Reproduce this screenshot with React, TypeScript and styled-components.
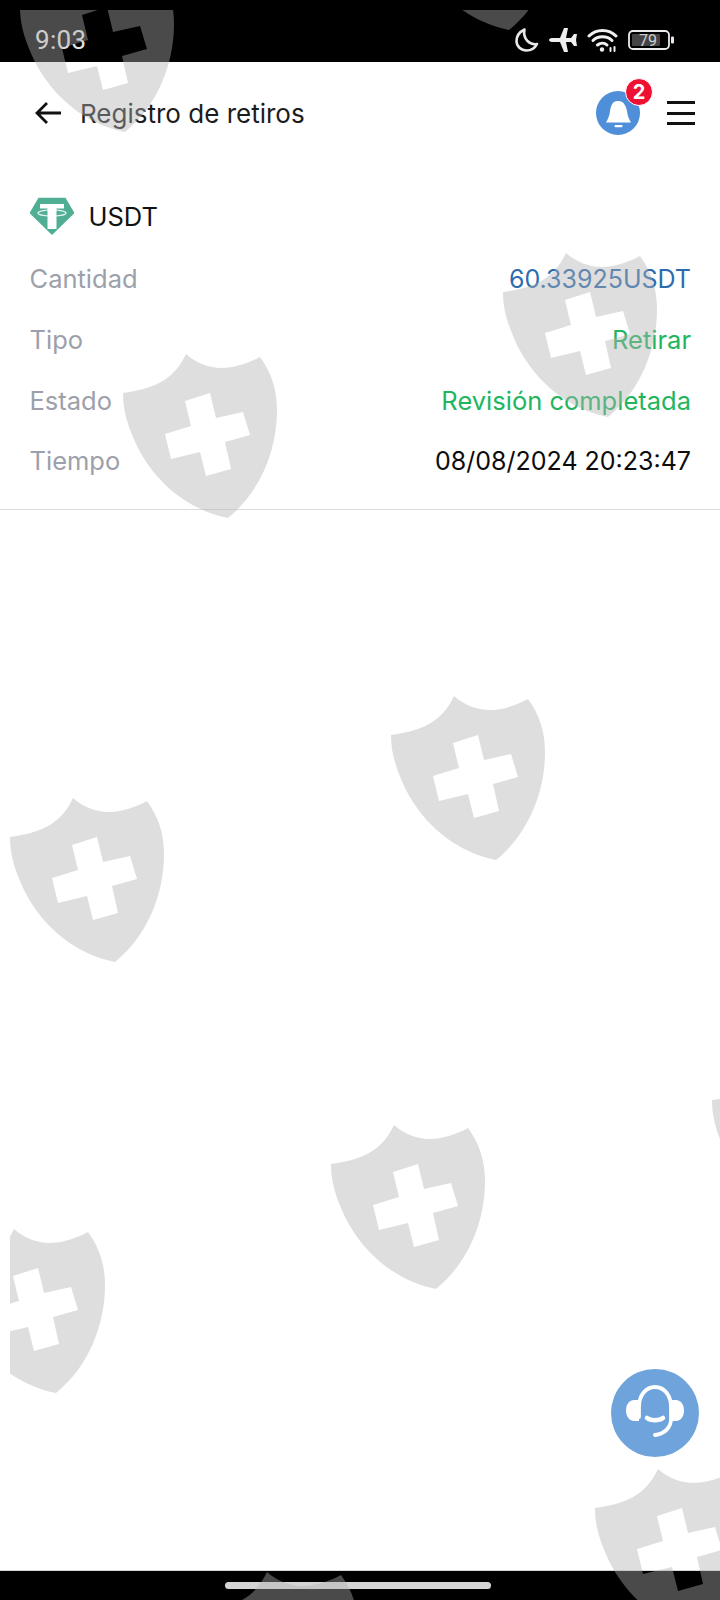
import React from "react";
import styled, { createGlobalStyle } from "styled-components";

const Global = createGlobalStyle`
  html, body { margin: 0; padding: 0; background: #fff; }
  * { box-sizing: border-box; }
`;

const Page = styled.div`
  position: relative;
  width: 720px;
  height: 1600px;
  display: flex;
  flex-direction: column;
  overflow: hidden;
  background: #fff;
  font-family: "Inter", "Liberation Sans", sans-serif;
`;

const StatusBar = styled.div`
  height: 62px;
  flex: none;
  background: #000;
  display: flex;
  align-items: center;
  justify-content: space-between;
  padding: 17px 46px 0 35px;
  color: #e2e2e2;
`;

const Clock = styled.span`
  font-family: "Roboto", sans-serif;
  font-size: 26px;
  letter-spacing: 0.3px;
`;

const StatusIcons = styled.div`
  display: flex;
  align-items: center;
  gap: 10px;
`;

const Header = styled.header`
  height: 102px;
  flex: none;
  display: flex;
  align-items: center;
  padding: 0 25px 0 34px;
`;

const Back = styled.span`
  display: flex;
  margin-right: 18px;
`;

const Title = styled.h1`
  margin: 0;
  flex: 1;
  font-size: 26px;
  font-weight: 400;
  color: #1c1c1c;
`;

const BellWrap = styled.div`
  position: relative;
  width: 44px;
  height: 44px;
  margin-right: 27px;
  border-radius: 50%;
  background: #4f8ed9;
`;

const Badge = styled.span`
  position: absolute;
  top: -13px;
  right: -13px;
  width: 28px;
  height: 28px;
  border: 1px solid #fff;
  border-radius: 50%;
  background: #ee1133;
  color: #fff;
  font-size: 20px;
  font-weight: 700;
  display: flex;
  align-items: center;
  justify-content: center;
`;

const Burger = styled.div`
  width: 28px;
  display: flex;
  flex-direction: column;
  gap: 7.5px;
`;

const BurgerLine = styled.span`
  height: 3px;
  background: #111;
`;

const Card = styled.section`
  padding: 32px 29px 18px 29.5px;
  border-bottom: 1px solid #dcdcdc;
`;

const Coin = styled.div`
  display: flex;
  align-items: center;
  gap: 15px;
  height: 40px;
  margin-bottom: 12.5px;
  font-size: 25.500px;
  color: #111;
`;

const Row = styled.div`
  display: flex;
  align-items: center;
  justify-content: space-between;
  height: 60.700px;
`;

const Label = styled.span`
  font-size: 25.500px;
  color: #9ca0aa;
`;

const Value = styled.span<{ $tone: "blue" | "green" | "dark" }>`
  font-size: ${(p) => (p.$tone === "green" ? "25.500px" : "25px")};
  color: ${(p) => (p.$tone === "blue" ? "#2b6cb0" : p.$tone === "green" ? "#22b55f" : "#0c0c0c")};
`;

const Body = styled.main`
  flex: 1;
`;

const NavBar = styled.footer`
  height: 30px;
  flex: none;
  background: #000;
  border-top: 1px solid #d8d8d8;
  display: flex;
  justify-content: center;
  padding: 11px 5px 0 0;
`;

const Pill = styled.span`
  width: 266px;
  height: 7px;
  border-radius: 4px;
  background: #d4d4d4;
`;

const Support = styled.div`
  position: absolute;
  left: 611px;
  top: 1369px;
  width: 88px;
  height: 88px;
  border-radius: 50%;
  background: #6fa3dc;
`;

const Watermarks = styled.div`
  position: absolute;
  inset: 10px 0 0 10px;
  overflow: hidden;
  pointer-events: none;
`;

const Shield = styled.svg<{ $x: number; $y: number }>`
  position: absolute;
  left: ${(p) => p.$x - 10}px;
  top: ${(p) => p.$y - 10}px;
  width: 156px;
  height: 165px;
`;

const spots: [number, number][] = [
  [20, -32],
  [404, -134],
  [503, 253],
  [123, 354],
  [391, 696],
  [10, 798],
  [712, 1061],
  [331, 1125],
  [-49, 1229],
  [595, 1469],
  [204, 1572],
];

const shieldPath =
  "M63 0C73 9 87 14 98 14C112 14 126 9 137 3C148 18 154 35 154 56C154 97 137 138 105 164C66 156 33 130 14 92C5 72 0 58 0 39C28 35 50 28 63 0Z";

const crossPath =
  "M62 47L87 39L93 64L120 58L127 81L102 88L108 115L83 122L77 98L48 105L42 80L68 72Z";

export default function App() {
  return (
    <Page>
      <Global />
      <StatusBar>
        <Clock>9:03</Clock>
        <StatusIcons>
          <svg width="24" height="24" viewBox="0 0 24 24" fill="none">
            <path d="M9.500 1.500C4.500 4 1.500 8.500 1.500 13c0 5.500 4.500 9.500 10 9.500 4.500 0 8.500-2.500 10.500-6.500C15 17.500 7.500 11 9.500 1.500Z" stroke="#e8e8e8" strokeWidth="2.600" strokeLinejoin="round" />
          </svg>
          <svg width="28" height="24" viewBox="0 0 28 24">
            <path d="M0 12c0-1.500 2-2 4-2h7L15 0h4l-2 10h5l3-4h3l-1 6 1 6h-3l-3-4h-5l2 10h-4l-4-10H4c-2 0-4-.5-4-2Z" fill="#eee" />
          </svg>
          <svg width="31" height="24" viewBox="0 0 31 24" fill="none" stroke="#f0f0f0" strokeWidth="3" strokeLinecap="round">
            <path d="M2 8C9 .5 22 .5 29 8" />
            <path d="M6 12.500C11 7.500 20 7.500 25 12.500" />
            <path d="M10.500 17c3-2.500 7-2.500 9.500 0" />
            <circle cx="15" cy="21.500" r="2.200" fill="#f0f0f0" stroke="none" />
            <path d="M23.500 20v3M27.500 19v4" strokeWidth="2" />
          </svg>
          <svg width="46" height="20" viewBox="0 0 46 20">
            <rect x="1" y="1" width="40" height="18" rx="4" fill="none" stroke="#ececec" strokeWidth="1.800" />
            <rect x="4" y="4" width="28" height="12" rx="1" fill="#444" />
            <rect x="43" y="6.500" width="3" height="7" rx="1" fill="#e8e8e8" />
            <text x="20" y="16" fontSize="16" fontFamily="Roboto, sans-serif" textAnchor="middle" fill="#ccc">79</text>
          </svg>
        </StatusIcons>
      </StatusBar>

      <Header>
        <Back>
          <svg width="28" height="24" viewBox="0 0 28 24" fill="none" stroke="#111" strokeWidth="2.800">
            <path d="M27 12H3M13 2 3 12l10 10" />
          </svg>
        </Back>
        <Title>Registro de retiros</Title>
        <BellWrap>
          <svg width="44" height="44" viewBox="0 0 44 44">
            <path d="M22 10C28 10 30 15 31 20C31.500 25 33 28 35 31.500H10C12 28 13.500 25 14 20C15 15 16 10 22 10Z" fill="#fff" />
            <rect x="18.500" y="34" width="8" height="2.200" rx="1" fill="#fff" />
          </svg>
          <Badge>2</Badge>
        </BellWrap>
        <Burger>
          <BurgerLine />
          <BurgerLine />
          <BurgerLine />
        </Burger>
      </Header>

      <Card>
        <Coin>
          <svg width="44" height="38" viewBox="0 0 44 38">
            <path d="M9 1.500h26l8.500 14.500L22 37 .5 16Z" fill="#4fae93" stroke="#4fae93" strokeWidth="1.500" strokeLinejoin="round" />
            <path d="M10 7h24v4.500H26.500V32h-9V11.500H10Z" fill="#fff" />
            <ellipse cx="22" cy="16" rx="14" ry="3" fill="none" stroke="#fff" strokeWidth="1.200" opacity="0.85" />
          </svg>
          USDT
        </Coin>
        <Row>
          <Label>Cantidad</Label>
          <Value $tone="blue">60.33925USDT</Value>
        </Row>
        <Row>
          <Label>Tipo</Label>
          <Value $tone="green">Retirar</Value>
        </Row>
        <Row>
          <Label>Estado</Label>
          <Value $tone="green">Revisión completada</Value>
        </Row>
        <Row>
          <Label>Tiempo</Label>
          <Value $tone="dark">08/08/2024 20:23:47</Value>
        </Row>
      </Card>

      <Body />

      <Support>
        <svg width="88" height="88" viewBox="0 0 88 88" fill="none">
          <path d="M28 48V38C28 26 35 18 44 18s16 8 16 20v12c0 8-6 15-16 16" stroke="#fff" strokeWidth="3.800" strokeLinecap="round" />
          <path d="M28 31v21h-5c-4 0-8-4-8-10.500S19 31 23 31Z" fill="#fff" />
          <path d="M60 31v21h5c4 0 8-4 8-10.500S69 31 65 31Z" fill="#fff" />
          <path d="M36 49c4 3 12 3 16 0" stroke="#fff" strokeWidth="4.500" strokeLinecap="round" />
        </svg>
      </Support>

      <NavBar>
        <Pill />
      </NavBar>

      <Watermarks>
        {spots.map(([x, y]) => (
          <Shield key={`${x}-${y}`} $x={x} $y={y} viewBox="0 0 156 165">
            <path d={shieldPath + crossPath} fill="rgb(176,176,176)" fillOpacity="0.42" fillRule="evenodd" />
          </Shield>
        ))}
      </Watermarks>
    </Page>
  );
}
